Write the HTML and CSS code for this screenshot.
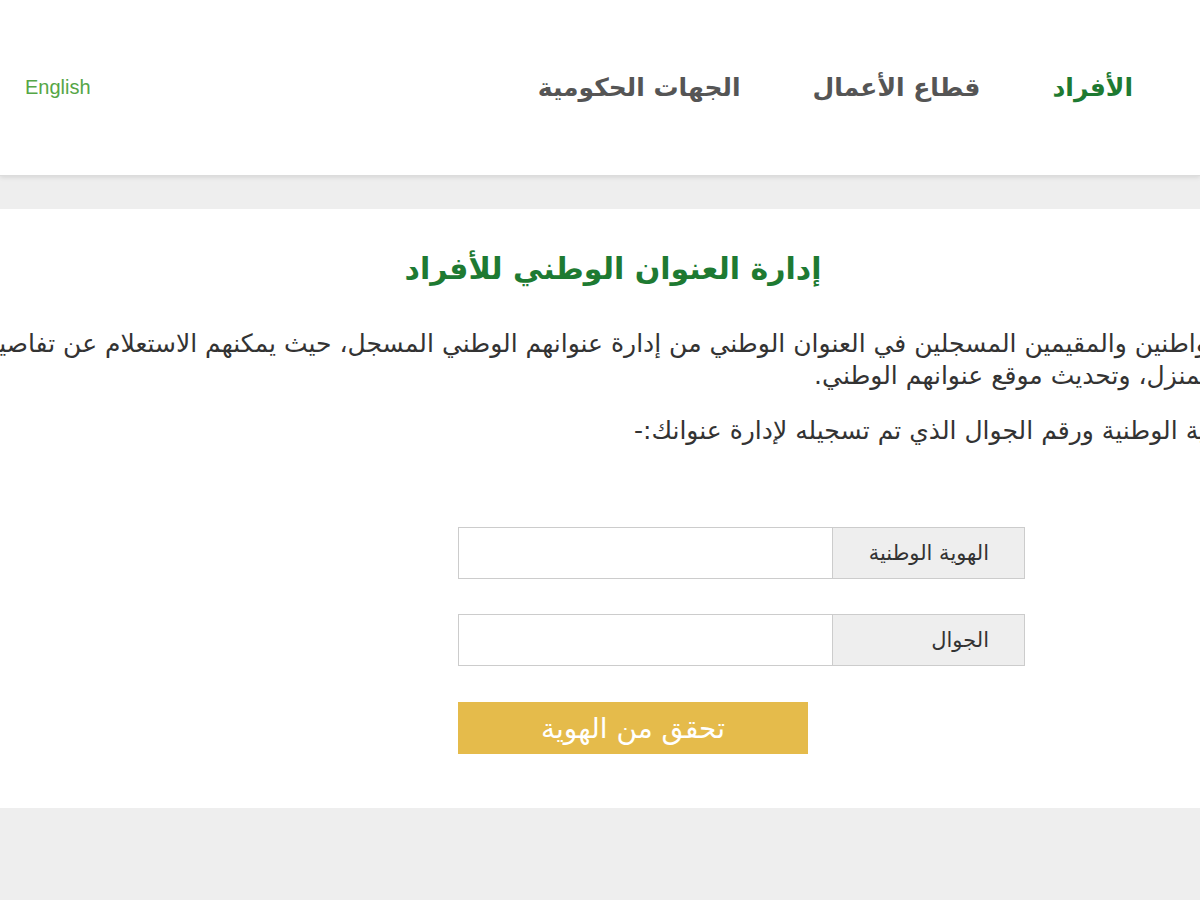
FILE: index.html
```html
<!DOCTYPE html>
<html lang="ar" dir="rtl">
<head>
  <meta charset="utf-8">
  <title>إدارة العنوان الوطني للأفراد</title>
  <link rel="stylesheet" href="styles.css">
</head>
<body>
  <header class="site-header">
    <nav class="main-nav">
      <a href="#" class="nav-link active">الأفراد</a>
      <a href="#" class="nav-link">قطاع الأعمال</a>
      <a href="#" class="nav-link">الجهات الحكومية</a>
    </nav>
    <a href="#" class="lang-link" lang="en" dir="ltr">English</a>
  </header>

  <main class="page">
    <section class="card">
      <div class="card-inner">
        <h1 class="card-title">إدارة العنوان الوطني للأفراد</h1>

        <p class="intro">للمواطنين والمقيمين المسجلين في العنوان الوطني من إدارة عنوانهم الوطني المسجل، حيث يمكنهم الاستعلام عن تفاصيل<br>المنزل، وتحديث موقع عنوانهم الوطني.</p>

        <p class="intro intro-note">الهوية الوطنية ورقم الجوال الذي تم تسجيله لإدارة عنوانك:-</p>

        <form id="verifyForm" class="verify-form">
          <div class="form-row">
            <label for="nationalId" class="field-label">الهوية الوطنية</label>
            <input type="text" id="nationalId" name="nationalId" class="field-input">
          </div>

          <div class="form-row">
            <label for="mobile" class="field-label">الجوال</label>
            <input type="text" id="mobile" name="mobile" class="field-input">
          </div>

          <button type="button" class="verify-btn">تحقق من الهوية</button>
        </form>
      </div>
    </section>
  </main>
</body>
</html>
```

FILE: styles.css
```css
html {
  height: 100%;
}

body {
  margin: 0;
  min-height: 100%;
  background-color: #eeeeee;
  font-family: "DejaVu Sans", sans-serif;
  color: #333;
  overflow-x: hidden;
}

a {
  text-decoration: none;
}

/* header */

.site-header {
  height: 175px;
  background-color: #fff;
  display: flex;
  align-items: center;
  justify-content: space-between;
  padding: 0 67px 0 25px;
  box-shadow: 0 1px 0 #dcdcdc, 0 2px 5px rgba(0, 0, 0, 0.12);
  position: relative;
}

.main-nav {
  display: flex;
  align-items: center;
  gap: 72px;
}

.nav-link {
  font-size: 25px;
  font-weight: bold;
  color: #555;
}

.nav-link.active {
  color: #1e7a32;
}

.lang-link {
  font-family: "Liberation Sans", Arial, sans-serif;
  font-size: 20px;
  color: #55a646;
}

/* content card */

.page {
  padding-top: 34px;
}

.card {
  background-color: #fff;
  overflow: hidden;
  padding: 40px 0 54px;
}

.card-inner {
  width: 1330px;
  margin-right: -15px;
}

.card-title {
  margin: 0 0 39px;
  padding-left: 126px;
  text-align: center;
  font-size: 30px;
  line-height: 40px;
  font-weight: bold;
  color: #1e7a32;
}

.intro {
  margin: 0 0 23px;
  font-size: 25px;
  line-height: 32px;
  color: #333;
  text-indent: -24px;
}

.intro-note {
  text-indent: -30px;
}

/* form */

.verify-form {
  width: 567px;
  margin: 80px 190px 0 0;
}

.form-row {
  display: flex;
  height: 52px;
  margin-bottom: 35px;
}

.field-label {
  width: 193px;
  box-sizing: border-box;
  display: flex;
  align-items: center;
  padding-right: 35px;
  background-color: #eeeeee;
  border: 1px solid #cccccc;
  font-size: 21px;
  color: #333;
}

.field-input {
  flex: 1;
  border: 1px solid #cccccc;
  border-right: none;
  background-color: #fff;
  font-size: 16px;
  padding: 0 12px;
  margin: 0;
  outline: none;
}

.verify-btn {
  display: block;
  width: 350px;
  height: 52px;
  margin: 36px auto 0 0;
  background-color: #e5bb4b;
  color: #fff;
  border: none;
  font-family: inherit;
  font-size: 28px;
  cursor: pointer;
}
```
